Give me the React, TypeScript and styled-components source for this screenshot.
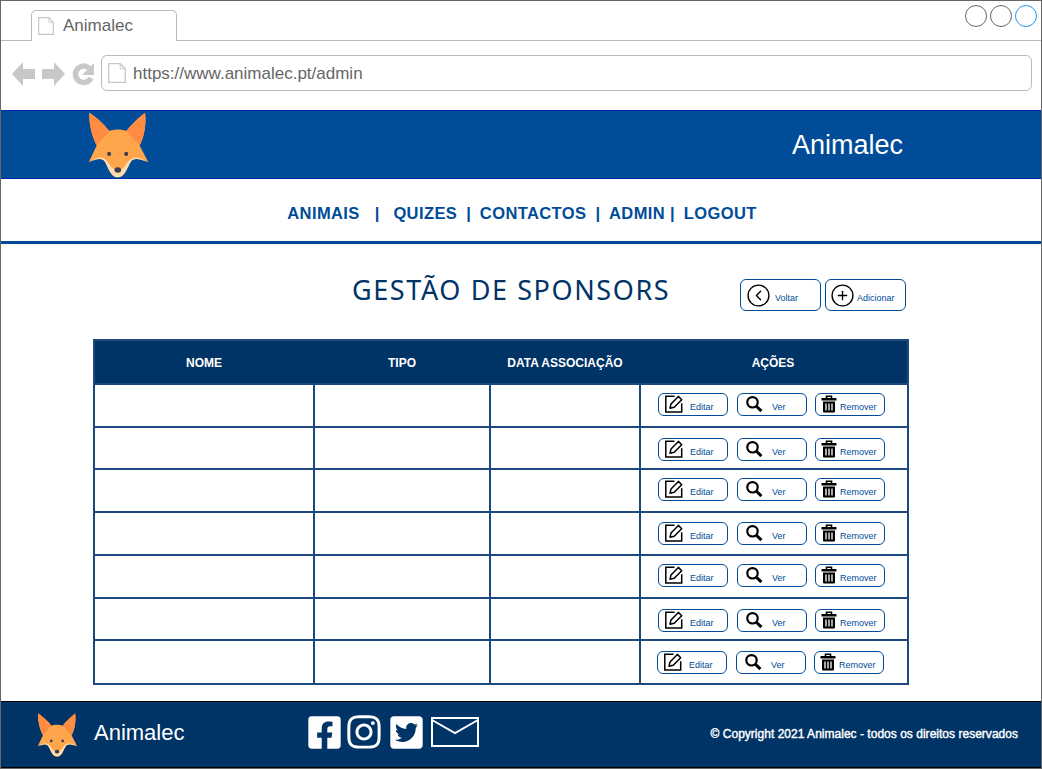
import styled, { createGlobalStyle } from 'styled-components';
import { CircleChevronLeft, CirclePlus } from 'lucide-react';
import { FaFacebookSquare, FaInstagram, FaTwitterSquare } from 'react-icons/fa';

const NAVY = '#003366';
const BLUE = '#004c99';
const GRID = '#1c4a7e';
const CHROME = '#c8c8c8';

const GlobalStyle = createGlobalStyle`
  html, body {
    margin: 0;
    background: #fff;
    font-family: 'Liberation Sans', Arial, sans-serif;
  }
  * {
    box-sizing: border-box;
  }
`;

// button top offset per row, the mockup is not quite regular
const rows = [
  { height: 43, top: 8, left: 17 },
  { height: 42, top: 10, left: 17 },
  { height: 43, top: 8, left: 17 },
  { height: 43, top: 9, left: 17 },
  { height: 43, top: 8, left: 17 },
  { height: 42, top: 10, left: 17 },
  { height: 42, top: 10, left: 16 },
];

function DocIcon({ size = 18 }: { size?: number }) {
  return (
    <svg width={size} height={size * 1.12} viewBox="0 0 16 18" fill="none" stroke={CHROME} strokeWidth="1.2">
      <path d="M.6.6h10.2l4.6 4.6v12.2H.6z" />
      <path d="M10.8.6v4.6h4.6" strokeWidth="0.8" />
    </svg>
  );
}

function FoxLogo({ width, height }: { width: number; height: number }) {
  return (
    <svg width={width} height={height} viewBox="58 18 182 197">
      <path
        d="M62 20C82 32 106 55 122 75C136 69 158 69 172 75C188 55 212 32 228 20C233 50 226 92 212 118L238 168C222 160 205 155 190 160C178 170 172 213 147 213C122 213 116 170 104 160C89 155 74 160 60 168L84 118C70 92 60 50 62 20Z"
        fill="#ffa64d"
      />
      <path d="M62 20C82 32 106 55 122 75L84 118C70 92 60 50 62 20Z" fill="#ff8c42" />
      <path d="M228 20C212 32 188 55 172 75L212 118C226 92 233 50 228 20Z" fill="#ff8c42" />
      <path
        d="M66 167C84 150 104 148 118 168C128 184 134 190 147 190C160 190 166 184 176 168C190 148 212 150 232 167C214 158 200 156 190 162C178 172 172 213 147 213C122 213 116 172 104 162C94 156 82 158 66 167Z"
        fill="#ffdcae"
      />
      <ellipse cx="147" cy="191" rx="10" ry="8" fill="#3d3d4e" />
      <circle cx="121" cy="143" r="6" fill="#3d3d4e" />
      <circle cx="172" cy="143" r="6" fill="#3d3d4e" />
    </svg>
  );
}

function EditIcon() {
  return (
    <svg width="18" height="18" viewBox="0 0 18 18" fill="none" stroke="#000" strokeWidth="1.5">
      <path d="M9.5 1.2H.8v15.9h15.9V8.2" />
      <path d="M5 13.2l1-4.2L13.4 1.4l3.3 3.3-7.5 7.5z" strokeLinejoin="round" />
    </svg>
  );
}

function SearchIcon() {
  return (
    <svg width="17" height="16" viewBox="0 0 17 16" fill="none" stroke="#000">
      <circle cx="6.5" cy="6.3" r="5.2" strokeWidth="2.2" />
      <path d="M10.4 10.2l5 4.9" strokeWidth="3" />
    </svg>
  );
}

function TrashIcon() {
  return (
    <svg width="16" height="18" viewBox="0 0 16 18">
      <path d="M5.5 3V1.2h5V3" fill="none" stroke="#000" strokeWidth="1.6" />
      <rect x="0.5" y="3" width="15" height="2.6" rx="0.6" fill="#000" />
      <path d="M2 6.6h12v10a1 1 0 0 1-1 1H3a1 1 0 0 1-1-1z" fill="#000" />
      <path d="M5 8.4v7M8 8.4v7M11 8.4v7" stroke="#fff" strokeWidth="1.3" />
    </svg>
  );
}

function MailIcon() {
  return (
    <svg width="48" height="30" viewBox="0 0 48 30" fill="none" stroke="#fff" strokeWidth="2">
      <rect x="1" y="1" width="46" height="28" />
      <path d="M1 3l23 13L47 3" />
    </svg>
  );
}

function RowActions() {
  return (
    <>
      <ActionButton $pad={6} $gap={7}>
        <EditIcon />
        <ActionLabel>Editar</ActionLabel>
      </ActionButton>
      <ActionButton $pad={8} $gap={9}>
        <SearchIcon />
        <ActionLabel>Ver</ActionLabel>
      </ActionButton>
      <ActionButton $pad={5} $gap={3}>
        <TrashIcon />
        <ActionLabel>Remover</ActionLabel>
      </ActionButton>
    </>
  );
}

export default function App() {
  return (
    <Window>
      <GlobalStyle />
      <TabStrip>
        <Tab>
          <DocIcon size={16} />
          Animalec
        </Tab>
        <WindowDots>
          <Dot />
          <Dot />
          <Dot $active />
        </WindowDots>
      </TabStrip>

      <AddressRow>
        <NavIcons>
          <svg width="23" height="24" viewBox="0 0 23 24">
            <path d="M0 12 11 0v7h12v10H11v7z" fill={CHROME} />
          </svg>
          <svg width="23" height="24" viewBox="0 0 23 24">
            <path d="M23 12 12 0v7H0v10h12v7z" fill={CHROME} />
          </svg>
          <svg width="23" height="24" viewBox="0 0 23 24">
            <path d="M19 16a8.2 8.2 0 1 1-2-10" fill="none" stroke={CHROME} strokeWidth="5.5" />
            <path d="M22 1v12H10z" fill={CHROME} />
          </svg>
        </NavIcons>
        <AddressBar>
          <DocIcon size={18} />
          <span>https://www.animalec.pt/admin</span>
        </AddressBar>
      </AddressRow>

      <Header>
        <FoxLogo width={61} height={66} />
        <Brand>Animalec</Brand>
      </Header>

      <Nav>
        <NavLink>ANIMAIS</NavLink>
        <NavSep $left={15} $right={14}>|</NavSep>
        <NavLink>QUIZES</NavLink>
        <NavSep $left={9} $right={9}>|</NavSep>
        <NavLink>CONTACTOS</NavLink>
        <NavSep $left={9} $right={9}>|</NavSep>
        <NavLink>ADMIN</NavLink>
        <NavSep $left={5} $right={9}>|</NavSep>
        <NavLink>LOGOUT</NavLink>
      </Nav>

      <TitleRow>
        <Title>GESTÃO DE SPONSORS</Title>
        <PageButton $pad={5} $gap={4}>
          <CircleChevronLeft size={25} color="#000" strokeWidth={1.3} />
          <PageLabel>Voltar</PageLabel>
        </PageButton>
        <PageButton $pad={4} $gap={2}>
          <CirclePlus size={25} color="#000" strokeWidth={1.3} />
          <PageLabel>Adicionar</PageLabel>
        </PageButton>
      </TitleRow>

      <Table>
        <HeadRow>
          <HeadCell>NOME</HeadCell>
          <HeadCell>TIPO</HeadCell>
          <HeadCell>DATA ASSOCIAÇÃO</HeadCell>
          <HeadCell>AÇÕES</HeadCell>
        </HeadRow>
        {rows.map((row, i) => (
          <BodyRow key={i} $height={row.height} $last={i === rows.length - 1}>
            <Cell />
            <Cell />
            <Cell />
            <ActionsCell $top={row.top} $left={row.left}>
              <RowActions />
            </ActionsCell>
          </BodyRow>
        ))}
      </Table>

      <Footer>
        <FoxLogo width={41} height={44} />
        <FooterBrand>Animalec</FooterBrand>
        <Social>
          <FaFacebookSquare size={37} color="#fff" />
          <FaInstagram size={38} color="#fff" />
          <FaTwitterSquare size={37} color="#fff" />
          <MailIcon />
        </Social>
        <Copyright>© Copyright 2021 Animalec - todos os direitos reservados</Copyright>
      </Footer>
    </Window>
  );
}

const Window = styled.div`
  display: flex;
  flex-direction: column;
  width: 1042px;
  height: 769px;
  border: 1px solid #666;
  background: #fff;
  overflow: hidden;
`;

const TabStrip = styled.div`
  display: flex;
  align-items: flex-end;
  flex: none;
  height: 40px;
  padding-left: 30px;
  border-bottom: 1px solid #bbb;
`;

const Tab = styled.div`
  display: flex;
  align-items: center;
  gap: 9px;
  width: 146px;
  height: 31px;
  margin-bottom: -1px;
  padding: 0 0 0 6px;
  border: 1px solid #bbb;
  border-bottom: none;
  border-radius: 5px 5px 0 0;
  background: #fff;
  color: #666;
  font-size: 17px;
`;

const WindowDots = styled.div`
  display: flex;
  align-self: flex-start;
  gap: 3px;
  margin: 4px 4px 0 auto;
`;

const Dot = styled.span<{ $active?: boolean }>`
  width: 22px;
  height: 22px;
  border: 1px solid ${({ $active }) => ($active ? '#2196f3' : '#666')};
  border-radius: 50%;
`;

const AddressRow = styled.div`
  display: flex;
  align-items: flex-start;
  flex: none;
  height: 69px;
  padding: 14px 9px 0 11px;
`;

const NavIcons = styled.div`
  display: flex;
  gap: 7px;
  margin-top: 7px;
  width: 89px;
`;

const AddressBar = styled.div`
  display: flex;
  align-items: center;
  gap: 7px;
  flex: 1;
  height: 36px;
  padding: 0 0 0 6px;
  border: 1px solid #bbb;
  border-radius: 6px;
  color: #666;
  font-size: 17px;

  span {
    margin-top: 1px;
  }
`;

const Header = styled.header`
  display: flex;
  align-items: center;
  flex: none;
  height: 69px;
  padding: 0 138px 0 87px;
  border-top: 1px solid #0029a8;
  border-bottom: 1px solid #0029a8;
  background: ${BLUE};
`;

const Brand = styled.div`
  margin: 2px 0 0 auto;
  color: #fff;
  font-size: 27px;
`;

const Nav = styled.nav`
  display: flex;
  align-items: center;
  justify-content: center;
  flex: none;
  height: 65px;
  padding: 6px 0 0 2px;
  border-bottom: 3px solid ${BLUE};
  color: ${BLUE};
  font-size: 16.5px;
  font-weight: 700;
`;

const NavLink = styled.a`
  letter-spacing: 0.4px;
`;

const NavSep = styled.span<{ $left: number; $right: number }>`
  margin: 0 ${({ $right }) => $right}px 0 ${({ $left }) => $left}px;
`;

const TitleRow = styled.div`
  display: flex;
  align-items: flex-start;
  gap: 4px;
  flex: none;
  height: 95px;
  padding: 35px 0 0 351px;
`;

const Title = styled.h1`
  width: 384px;
  margin: -5px 0 0;
  color: ${NAVY};
  font-family: 'Noto Sans', sans-serif;
  font-size: 27px;
  font-weight: 400;
  line-height: 32px;
  letter-spacing: 1.6px;
  white-space: nowrap;
`;

const PageButton = styled.button<{ $pad: number; $gap: number }>`
  display: flex;
  align-items: center;
  gap: ${({ $gap }) => $gap}px;
  width: 81px;
  height: 32px;
  padding: 0 0 0 ${({ $pad }) => $pad}px;
  border: 1px solid ${BLUE};
  border-radius: 6px;
  background: #fff;
`;

const PageLabel = styled.span`
  margin-top: 5px;
  color: ${BLUE};
  font-family: 'Liberation Sans', sans-serif;
  font-size: 9px;
`;

const Table = styled.div`
  flex: none;
  width: 816px;
  margin-left: 92px;
  border: 2px solid ${GRID};
`;

const HeadRow = styled.div`
  display: grid;
  grid-template-columns: 220px 176px 150px 1fr;
  height: 44px;
  border-bottom: 2px solid ${GRID};
  background: ${NAVY};
`;

const HeadCell = styled.div`
  display: flex;
  align-items: center;
  justify-content: center;
  padding: 2px 2px 0 0;
  color: #fff;
  font-size: 12px;
  font-weight: 700;
`;

const BodyRow = styled.div<{ $height: number; $last: boolean }>`
  display: grid;
  grid-template-columns: 220px 176px 150px 1fr;
  height: ${({ $height }) => $height}px;
  border-bottom: ${({ $last }) => ($last ? 'none' : `2px solid ${GRID}`)};
`;

const Cell = styled.div`
  border-right: 2px solid ${GRID};
`;

const ActionsCell = styled.div<{ $top: number; $left: number }>`
  display: grid;
  grid-template-columns: 79px 78px 70px;
  align-items: start;
  padding: ${({ $top }) => $top}px 0 0 ${({ $left }) => $left}px;
`;

const ActionButton = styled.button<{ $pad: number; $gap: number }>`
  display: flex;
  align-items: center;
  gap: ${({ $gap }) => $gap}px;
  width: 70px;
  height: 23px;
  padding: 0 0 2px ${({ $pad }) => $pad}px;
  border: 1px solid ${BLUE};
  border-radius: 6px;
  background: #fff;
`;

const ActionLabel = styled.span`
  margin-top: 6px;
  color: ${BLUE};
  font-family: 'Liberation Sans', sans-serif;
  font-size: 9px;
`;

const Footer = styled.footer`
  display: flex;
  align-items: center;
  flex: none;
  height: 67px;
  margin-top: auto;
  padding: 0 23px 0 36px;
  border-top: 1px solid #000;
  border-bottom: 1px solid #000;
  background: ${NAVY};
`;

const FooterBrand = styled.div`
  width: 212px;
  margin: 0 0 3px 16px;
  color: #fff;
  font-size: 22px;
`;

const Social = styled.div`
  display: flex;
  align-items: center;
  gap: 3px;
  padding-bottom: 5px;

  svg:nth-child(2) {
    margin-left: -1px;
  }
  svg:nth-child(3) {
    margin-left: 2px;
  }
  svg:nth-child(4) {
    margin-left: 3px;
  }
`;

const Copyright = styled.div`
  margin: 0 0 2px auto;
  color: #fff;
  font-size: 12px;
  letter-spacing: 0.02px;
  -webkit-text-stroke: 0.4px #fff;
`;
